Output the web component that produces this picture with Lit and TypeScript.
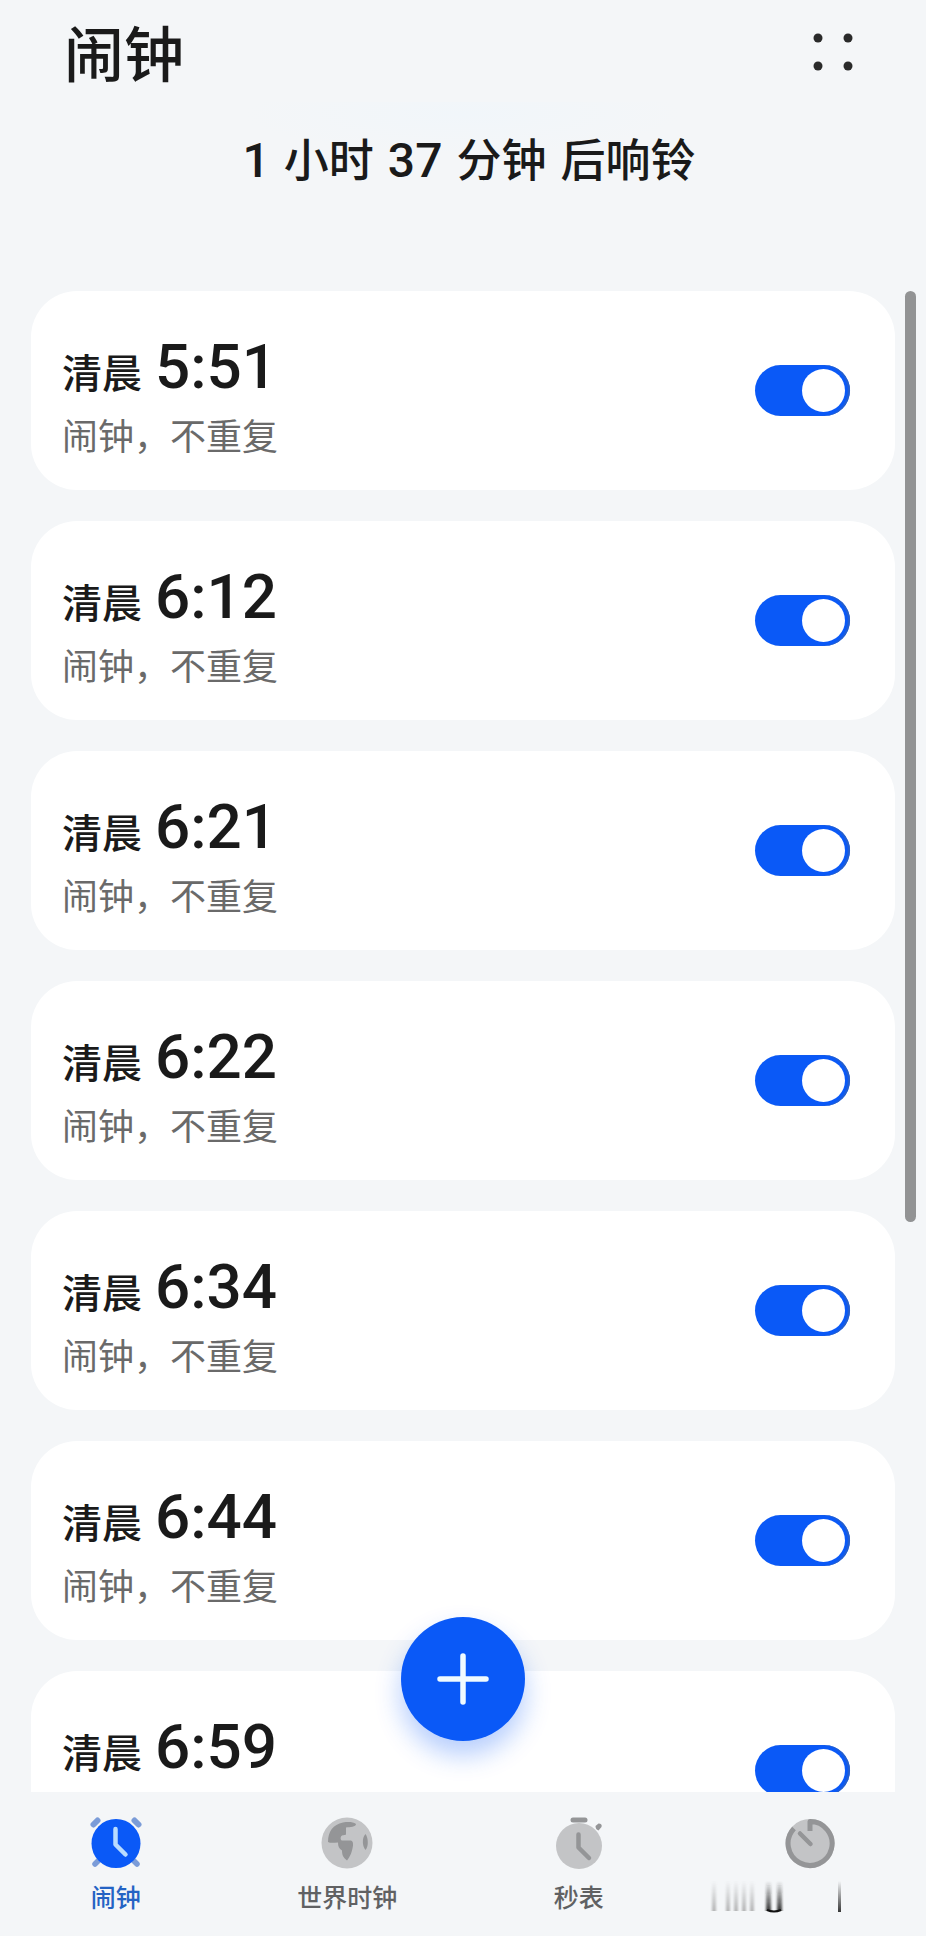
import { LitElement, html, css, svg, nothing } from "lit";
import { customElement, property, state } from "lit/decorators.js";

interface Alarm {
  period: string;
  time: string;
  note: string;
  on: boolean;
}

const ALARMS: Alarm[] = ["5:51", "6:12", "6:21", "6:22", "6:34", "6:44", "6:59"].map((time) => ({
  period: "清晨",
  time,
  note: "闹钟，不重复",
  on: true,
}));

@customElement("alarm-card")
class AlarmCard extends LitElement {
  @property({ attribute: false }) alarm!: Alarm;
  @state() on = true;

  static styles = css`
    :host {
      display: block;
      flex: none;
    }
    .card {
      display: flex;
      align-items: center;
      justify-content: space-between;
      height: 199px;
      padding: 10px 45px 0 31px;
      box-sizing: border-box;
      border-radius: 46px;
      background: #fff;
    }
    .text {
      display: flex;
      flex-direction: column;
    }
    .line {
      display: flex;
      align-items: baseline;
      gap: 13px;
      color: #1a1a1a;
      font-weight: 500;
      line-height: 72px;
    }
    .period {
      font-size: 40px;
    }
    .time {
      font-family: Roboto, "Noto Sans CJK SC", sans-serif;
      font-size: 62px;
    }
    .note {
      font-size: 36px;
      line-height: 54px;
      font-weight: 400;
      color: #6a6a6a;
    }
    .toggle {
      appearance: none;
      display: flex;
      align-items: center;
      width: 95px;
      height: 51px;
      margin: 0 0 10px;
      padding: 4px 5px;
      box-sizing: border-box;
      border-radius: 26px;
      background: #c8cacc;
      cursor: pointer;
    }
    .toggle::before {
      content: "";
      width: 43px;
      height: 43px;
      border-radius: 50%;
      background: #fff;
    }
    .toggle:checked {
      justify-content: flex-end;
      background: #0a59f7;
      box-shadow: inset -2px 0 1px #2860c8;
    }
  `;

  render() {
    const { period, time, note } = this.alarm;
    return html`
      <label class="card">
        <span class="text">
          <span class="line"><span class="period">${period}</span><time class="time">${time}</time></span>
          <span class="note">${note}</span>
        </span>
        <input
          class="toggle"
          type="checkbox"
          role="switch"
          .checked=${this.on}
          @change=${(e: Event) => (this.on = (e.target as HTMLInputElement).checked)}
        />
      </label>
    `;
  }
}

const alarmIcon = svg`
  <g stroke="#7b9cd8" stroke-linecap="round">
    <path d="M3.500 7.500l4-4M48.500 7.500l-4-4" stroke-width="6" />
    <path d="M5 47l4-4M47 47l-4-4" stroke-width="5.500" />
  </g>
  <circle cx="26" cy="26.500" r="24.500" fill="#0a59f7" />
  <path d="M25.500 12v15.500l10 10" fill="none" stroke="#b9dcff" stroke-width="4.500" stroke-linecap="round" stroke-linejoin="round" />`;

const worldIcon = svg`
  <circle cx="26" cy="26" r="25.500" fill="#c3c4c6" />
  <path d="M7 25C7 14 12 8 22 5.500c6-1 10-.500 13 1.500 0 3-6 3-10 3.500v7c-1 1-4 0-5 2-1 2 0 4 1 4h9c2 1 2 2 2 5-1 7-3 11-6 15-4-3-5-6-5-10-3-2-4-4-4-8-4 0-7 1-10-.500z" fill="#949597" />
  <path d="M44.500 17c3 4 3 13 0 16-3-3-4-12 0-16z" fill="#949597" />`;

const stopwatchIcon = svg`
  <circle cx="26" cy="29" r="23" fill="#c3c4c6" />
  <path d="M20 3h12" stroke="#949597" stroke-width="5" stroke-linecap="round" />
  <path d="M42.500 9l3-2.500q4 0 3 3.500l-3 3.500q-3-1-3-4.500z" fill="#949597" />
  <path d="M25.500 17.500v13l10.500 10.500" fill="none" stroke="#949597" stroke-width="4.500" stroke-linecap="round" stroke-linejoin="round" />`;

const timerIcon = svg`
  <circle cx="26" cy="26.500" r="24.500" fill="#c3c4c6" />
  <path d="M26 14V4.500A22 22 0 1 1 10 11.500" fill="none" stroke="#949597" stroke-width="5" stroke-linejoin="round" />
  <path d="M16 16.500l10.500 10.500" stroke="#949597" stroke-width="4.500" stroke-linecap="round" />`;

const TABS = [
  { label: "闹钟", icon: alarmIcon },
  { label: "世界时钟", icon: worldIcon },
  { label: "秒表", icon: stopwatchIcon },
  { label: "", icon: timerIcon },
];

@customElement("app-root")
class AppRoot extends LitElement {
  @state() tab = 0;

  static styles = css`
    :host {
      display: flex;
      flex-direction: column;
      height: 100vh;
      background: #f4f6f8;
      color: #1a1a1a;
      font-family: "Noto Sans CJK SC", sans-serif;
    }
    .header {
      display: flex;
      align-items: center;
      justify-content: space-between;
      height: 102px;
      padding: 0 64px;
    }
    .title {
      margin: 0;
      font-size: 60px;
      line-height: 88px;
      font-weight: 500;
    }
    .menu {
      display: flex;
      padding: 2px 0 0;
      margin-right: 6px;
      border: 0;
      background: none;
      cursor: pointer;
    }
    .next {
      display: flex;
      justify-content: center;
      align-items: baseline;
      gap: 14px;
      box-sizing: border-box;
      margin: 0;
      padding: 23px 0 0 12px;
      height: 189px;
      font-size: 45px;
      line-height: 66px;
      font-weight: 500;
      background: radial-gradient(220px 40px at 50% 12px, #f1f6fa, transparent);
    }
    .num {
      font-family: Roboto, sans-serif;
      font-size: 48px;
    }
    .list {
      flex: 1;
      min-height: 0;
      display: grid;
      grid-template-columns: minmax(0, 1fr) 31px;
      grid-template-rows: minmax(0, 1fr);
    }
    .cards {
      display: flex;
      flex-direction: column;
      gap: 31px;
      padding-left: 31px;
      min-height: 0;
      overflow-y: auto;
      scrollbar-width: none;
    }
    .scroll {
      justify-self: center;
      width: 11px;
      height: 62%;
      border-radius: 6px;
      background: #929394;
    }
    .foot {
      position: relative;
      height: 144px;
    }
    .add {
      position: absolute;
      left: 50%;
      bottom: 195px;
      transform: translateX(-50%);
      display: grid;
      place-items: center;
      width: 124px;
      height: 124px;
      padding: 0;
      border: 0;
      border-radius: 50%;
      background: #0a59f7;
      box-shadow: 0 14px 26px rgba(10, 89, 247, 0.3);
      cursor: pointer;
    }
    .tabs {
      display: grid;
      grid-template-columns: repeat(4, 1fr);
      height: 100%;
    }
    .tab {
      display: flex;
      flex-direction: column;
      align-items: center;
      gap: 8px;
      padding: 25px 0 0;
      border: 0;
      background: none;
      font: 500 25px/38px "Noto Sans CJK SC", sans-serif;
      color: #606163;
      cursor: pointer;
    }
    .tab.active {
      color: #2463c4;
    }
    .smudge {
      width: 210px;
      height: 42px;
    }
  `;

  private smudge() {
    const pale = [7, 21, 29, 37, 45];
    return html`
      <svg class="smudge" viewBox="0 0 210 42" aria-hidden="true">
        <defs>
          <linearGradient id="soft" x2="0" y2="1">
            <stop offset="0" stop-color="#999" stop-opacity="0" />
            <stop offset="1" stop-color="#999" stop-opacity="0.700" />
          </linearGradient>
          <linearGradient id="dark" x2="0" y2="1">
            <stop offset="0" stop-color="#222" stop-opacity="0" />
            <stop offset="1" stop-color="#222" stop-opacity="0.900" />
          </linearGradient>
          <filter id="blur" x="-1" width="3"><feGaussianBlur stdDeviation="1 0.300" /></filter>
        </defs>
        <g filter="url(#blur)">
          ${pale.map((x) => svg`<rect x=${x} y="4" width="4" height="30" fill="url(#soft)" />`)}
          <rect x="61" y="4" width="5" height="30" fill="url(#dark)" />
          <rect x="72" y="4" width="5" height="30" fill="url(#dark)" />
        </g>
        <path d="M62 33q7 3 14 0" fill="none" stroke="#111" stroke-width="2" />
        <rect x="133" y="4" width="3" height="31" fill="url(#dark)" />
      </svg>
    `;
  }

  render() {
    return html`
      <header class="header">
        <h1 class="title">闹钟</h1>
        <button class="menu" aria-label="更多">
          <svg width="46" height="46" viewBox="0 0 46 46" fill="#2a2a2a">
            <circle cx="8" cy="9" r="4.500" /><circle cx="38" cy="9" r="4.500" />
            <circle cx="8" cy="37" r="4.500" /><circle cx="38" cy="37" r="4.500" />
          </svg>
        </button>
      </header>
      <p class="next">
        <span class="num">1</span><span>小时</span><span class="num">37</span><span>分钟</span><span>后响铃</span>
      </p>
      <main class="list">
        <div class="cards">${ALARMS.map((a) => html`<alarm-card .alarm=${a}></alarm-card>`)}</div>
        <div class="scroll"></div>
      </main>
      <footer class="foot">
        <button class="add" aria-label="添加闹钟">
          <svg width="52" height="52" viewBox="0 0 52 52" stroke="#f0fbff" stroke-width="5.500" stroke-linecap="round">
            <path d="M26 3v46M3 26h46" />
          </svg>
        </button>
        <nav class="tabs">
          ${TABS.map(
            (t, i) => html`
              <button
                class="tab ${i === this.tab ? "active" : ""}"
                aria-current=${i === this.tab ? "page" : nothing}
                aria-label=${t.label || "计时器"}
                @click=${() => (this.tab = i)}
              >
                <svg width="52" height="52" viewBox="0 0 52 52">${t.icon}</svg>
                ${t.label ? html`<span>${t.label}</span>` : this.smudge()}
              </button>
            `
          )}
        </nav>
      </footer>
    `;
  }
}
